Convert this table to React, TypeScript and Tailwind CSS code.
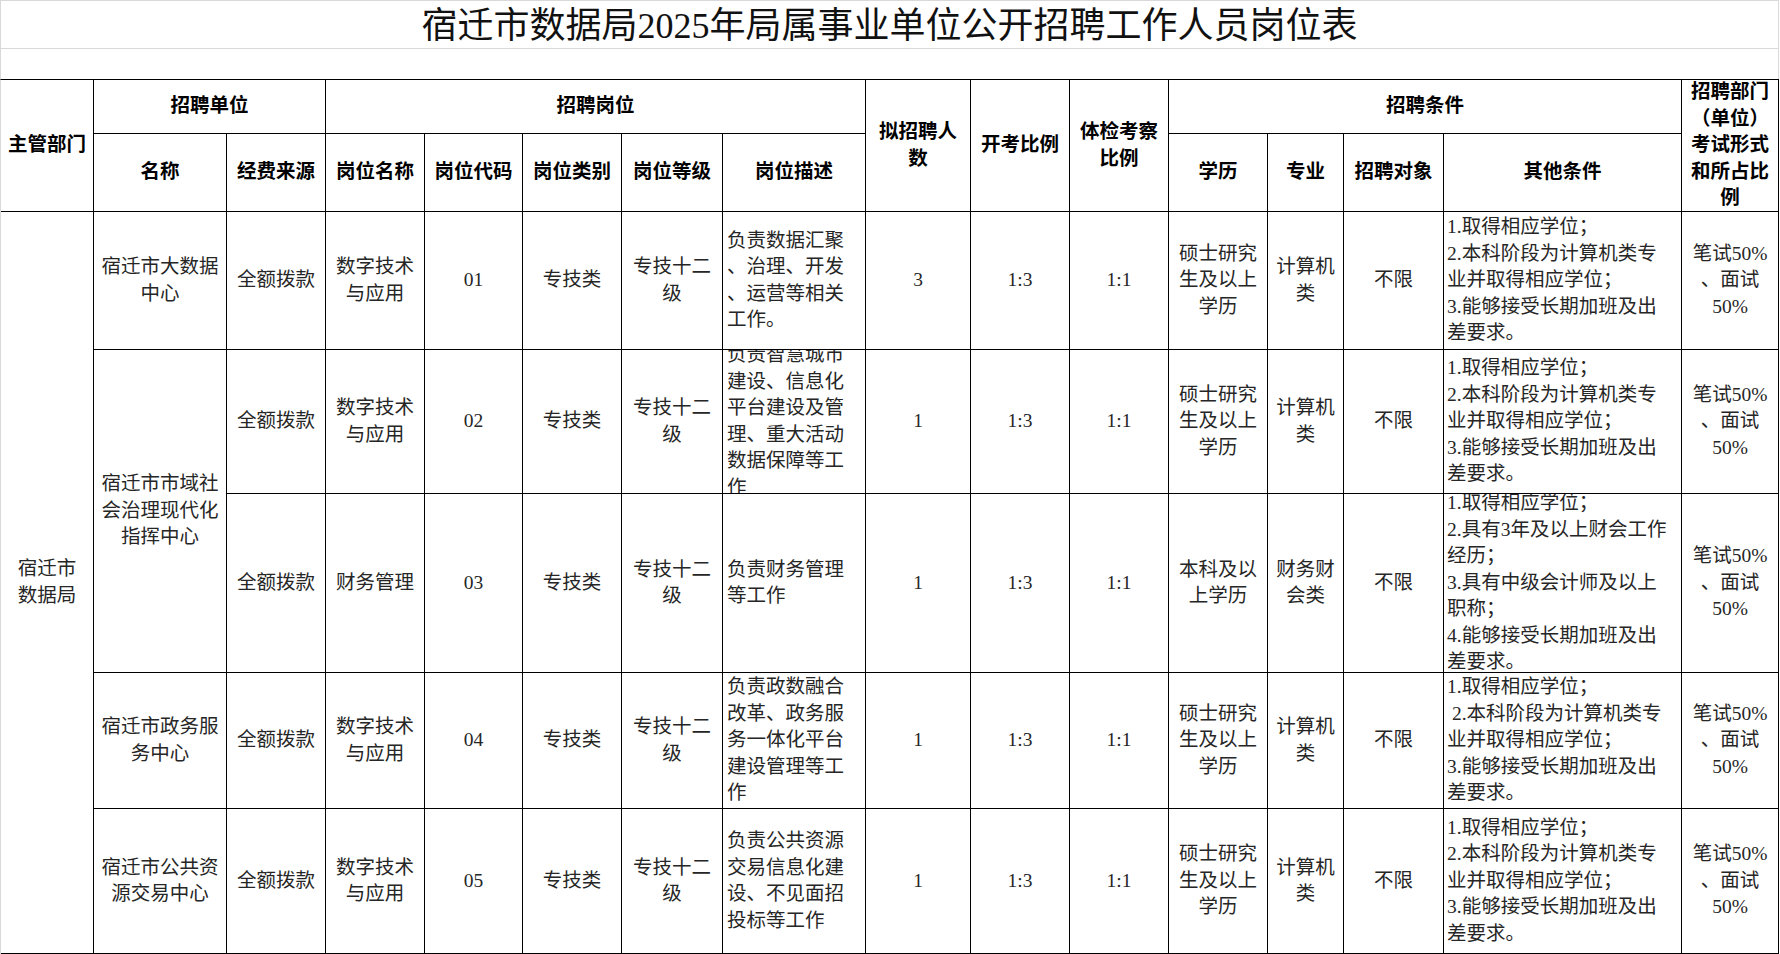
import * as React from "react";

// 岗位表：列宽、行高按截图量出
const COLS =
  "grid-cols-[93px_133px_99px_99px_98px_99px_101px_143px_105px_99px_99px_99px_76px_100px_238px_97px]";
const ROWS = "grid-rows-[54px_78px_138px_144px_179px_136px_145px]";

interface Post {
  name: string[] | null; // null = covered by the merged cell above
  nameSpan?: boolean;
  post: string[];
  code: string;
  desc: string[];
  num: string;
  edu: string[];
  major: string[];
  other: string[];
}

const OTHER_CS = [
  "1.取得相应学位；",
  "2.本科阶段为计算机类专",
  "业并取得相应学位；",
  "3.能够接受长期加班及出",
  "差要求。",
];

const POSTS: Post[] = [
  {
    name: ["宿迁市大数据", "中心"],
    post: ["数字技术", "与应用"],
    code: "01",
    desc: ["负责数据汇聚", "、治理、开发", "、运营等相关", "工作。"],
    num: "3",
    edu: ["硕士研究", "生及以上", "学历"],
    major: ["计算机", "类"],
    other: OTHER_CS,
  },
  {
    name: ["宿迁市市域社", "会治理现代化", "指挥中心"],
    nameSpan: true,
    post: ["数字技术", "与应用"],
    code: "02",
    desc: ["负责智慧城市", "建设、信息化", "平台建设及管", "理、重大活动", "数据保障等工", "作"],
    num: "1",
    edu: ["硕士研究", "生及以上", "学历"],
    major: ["计算机", "类"],
    other: OTHER_CS,
  },
  {
    name: null,
    post: ["财务管理"],
    code: "03",
    desc: ["负责财务管理", "等工作"],
    num: "1",
    edu: ["本科及以", "上学历"],
    major: ["财务财", "会类"],
    other: [
      "1.取得相应学位；",
      "2.具有3年及以上财会工作",
      "经历；",
      "3.具有中级会计师及以上",
      "职称；",
      "4.能够接受长期加班及出",
      "差要求。",
    ],
  },
  {
    name: ["宿迁市政务服", "务中心"],
    post: ["数字技术", "与应用"],
    code: "04",
    desc: ["负责政数融合", "改革、政务服", "务一体化平台", "建设管理等工", "作"],
    num: "1",
    edu: ["硕士研究", "生及以上", "学历"],
    major: ["计算机", "类"],
    other: [
      "1.取得相应学位；",
      " 2.本科阶段为计算机类专",
      "业并取得相应学位；",
      "3.能够接受长期加班及出",
      "差要求。",
    ],
  },
  {
    name: ["宿迁市公共资", "源交易中心"],
    post: ["数字技术", "与应用"],
    code: "05",
    desc: ["负责公共资源", "交易信息化建", "设、不见面招", "投标等工作"],
    num: "1",
    edu: ["硕士研究", "生及以上", "学历"],
    major: ["计算机", "类"],
    other: OTHER_CS,
  },
];

function Cell({
  lines,
  className = "",
  left = false,
  head = false,
}: {
  lines: string[];
  className?: string;
  left?: boolean;
  head?: boolean;
}) {
  return (
    <div
      className={`flex min-h-0 min-w-0 flex-col justify-center overflow-hidden border-r border-b border-black ${
        left ? "items-start" : "items-center text-center"
      } ${head ? "font-bold text-black" : "text-[#262626]"} ${className}`}
    >
      {lines.map((l, i) => (
        <span key={i} className="whitespace-pre">
          {l}
        </span>
      ))}
    </div>
  );
}

export default function App() {
  return (
    <div className="h-[954px] w-[1780px] overflow-hidden bg-white font-['Liberation_Serif','Noto_Sans_CJK_SC',serif] text-[19.5px] leading-[26.5px]">
      {/* 标题行 + 空白行 (Excel gridlines) */}
      <div className="flex h-[49px] w-[1779px] items-center justify-center border-t border-r border-b border-l border-[#d9d9d9] pt-[3px] text-[36px] leading-none text-[#111]">
        宿迁市数据局2025年局属事业单位公开招聘工作人员岗位表
      </div>
      <div className="h-[30px] w-[1779px] border-r border-l border-[#d9d9d9]" />

      <div className={`grid w-[1779px] border-t border-l border-t-black border-l-[#d9d9d9] ${COLS} ${ROWS}`}>
        {/* header row 1 */}
        <Cell head lines={["主管部门"]} className="row-span-2" />
        <Cell head lines={["招聘单位"]} className="col-span-2" />
        <Cell head lines={["招聘岗位"]} className="col-span-5" />
        <Cell head lines={["拟招聘人", "数"]} className="row-span-2" />
        <Cell head lines={["开考比例"]} className="row-span-2" />
        <Cell head lines={["体检考察", "比例"]} className="row-span-2" />
        <Cell head lines={["招聘条件"]} className="col-span-4" />
        <Cell head lines={["招聘部门", "（单位）", "考试形式", "和所占比", "例"]} className="row-span-2" />

        {/* header row 2 */}
        <Cell head lines={["名称"]} />
        <Cell head lines={["经费来源"]} />
        <Cell head lines={["岗位名称"]} />
        <Cell head lines={["岗位代码"]} />
        <Cell head lines={["岗位类别"]} />
        <Cell head lines={["岗位等级"]} />
        <Cell head lines={["岗位描述"]} />
        <Cell head lines={["学历"]} />
        <Cell head lines={["专业"]} />
        <Cell head lines={["招聘对象"]} />
        <Cell head lines={["其他条件"]} />

        {POSTS.map((p, i) => (
          <React.Fragment key={p.code}>
            {i === 0 && <Cell lines={["宿迁市", "数据局"]} className="row-span-5" />}
            {p.name && <Cell lines={p.name} className={p.nameSpan ? "row-span-2" : ""} />}
            <Cell lines={["全额拨款"]} />
            <Cell lines={p.post} />
            <Cell lines={[p.code]} />
            <Cell lines={["专技类"]} />
            <Cell lines={["专技十二", "级"]} />
            <Cell left lines={p.desc} className="pl-[4px]" />
            <Cell lines={[p.num]} />
            <Cell lines={["1:3"]} />
            <Cell lines={["1:1"]} />
            <Cell lines={p.edu} />
            <Cell lines={p.major} />
            <Cell lines={["不限"]} />
            <Cell left lines={p.other} className="pl-[3px]" />
            <Cell lines={["笔试50%", "、面试", "50%"]} />
          </React.Fragment>
        ))}
      </div>
    </div>
  );
}
